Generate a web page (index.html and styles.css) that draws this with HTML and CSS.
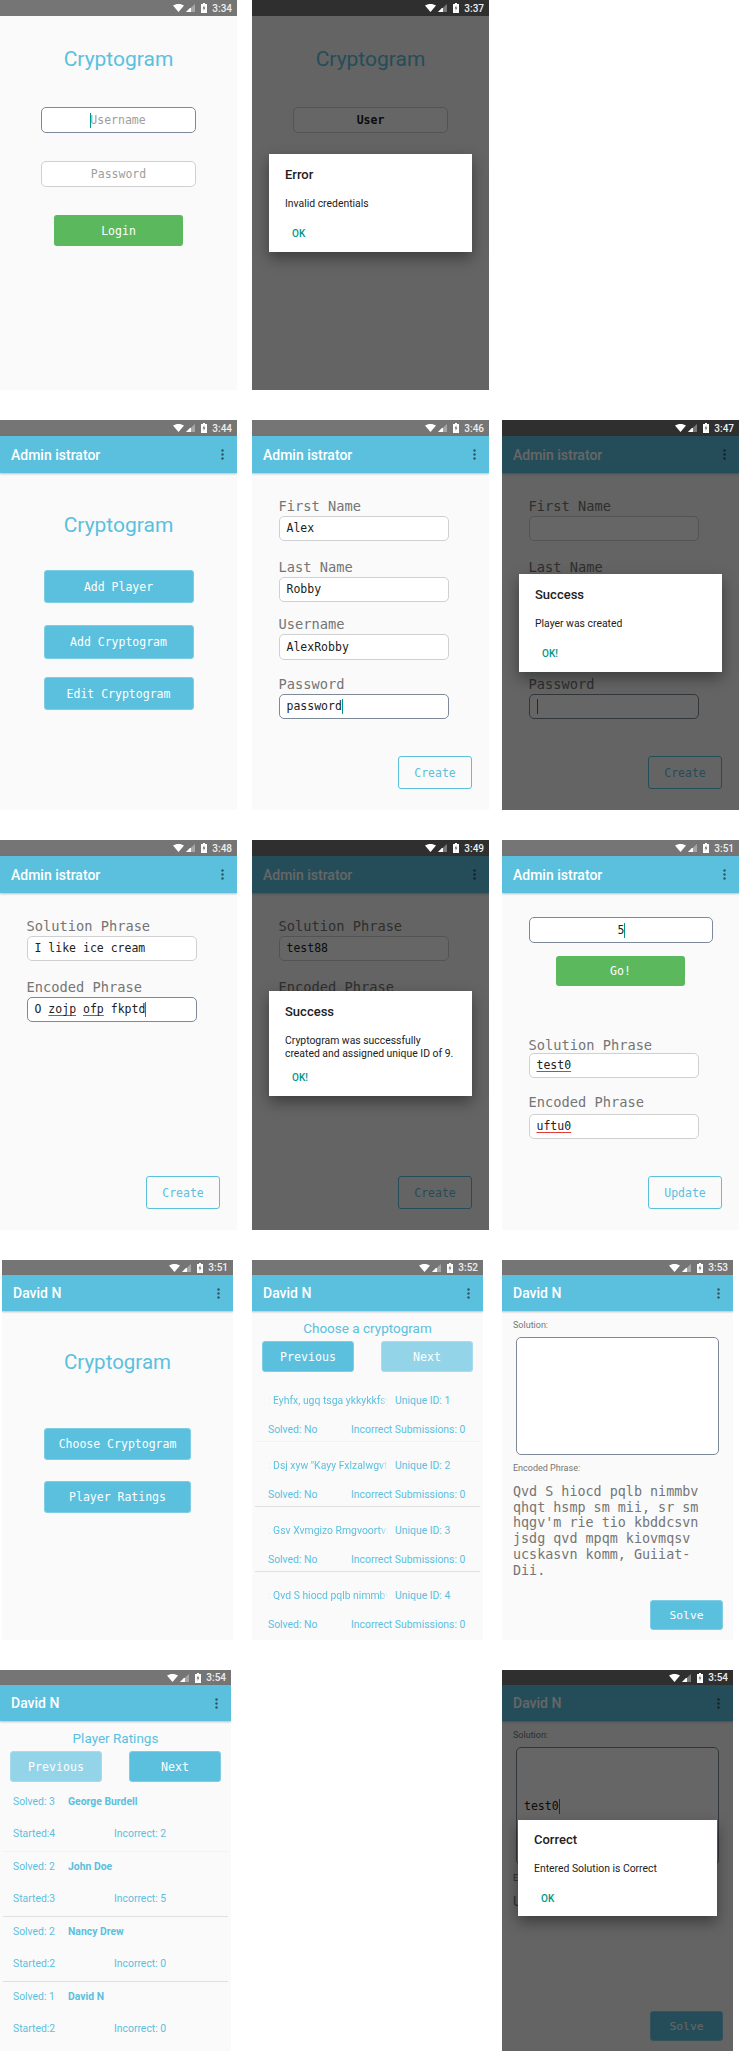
FILE: index.html
```html
<!DOCTYPE html>
<html lang="en">
<head>
    <meta charset="UTF-8">
    <meta name="viewport" content="width=device-width, initial-scale=1.0">
    <title>Cryptogram - App Screens</title>
    <link rel="stylesheet" href="styles.css">
</head>
<body>
    <!-- Status bar icons, reused on every screen -->
    <svg class="defs" xmlns="http://www.w3.org/2000/svg">
        <symbol id="wifi" viewBox="0 0 11 8"><path d="M0 1.6C1.5.5 3.4 0 5.5 0s4 .5 5.5 1.6L5.5 8z" fill="#fff"/></symbol>
        <symbol id="signal" viewBox="0 0 9 8"><path d="M9 0v8H0z" fill="#fff" opacity=".35"/><path d="M5 4v4H0l3.9-4z" fill="#fff"/></symbol>
        <symbol id="battery" viewBox="0 0 6 10"><path d="M2 0h2v1h2v9H0V1h2z" fill="#fff"/><path d="M3.4 2.2 1.6 5.6h1.2l-.3 2.4 1.9-3.5H3.2z" fill="#666"/></symbol>
        <symbol id="dots" viewBox="0 0 3 11"><circle cx="1.5" cy="1.5" r="1.2"/><circle cx="1.5" cy="5.5" r="1.2"/><circle cx="1.5" cy="9.5" r="1.2"/></symbol>
    </svg>

    <!-- Login -->
    <div class="row">
        <div class="screen">
            <div class="status"><svg class="i-wifi"><use href="#wifi"/></svg><svg class="i-signal"><use href="#signal"/></svg><svg class="i-battery"><use href="#battery"/></svg><span>3:34</span></div>
            <div class="content login">
                <h1 class="brand">Cryptogram</h1>
                <div class="input focus center hint"><span class="caret before"></span>Username</div>
                <div class="input center hint">Password</div>
                <div class="btn green">Login</div>
            </div>
        </div>
        <div class="screen dim">
            <div class="status"><svg class="i-wifi"><use href="#wifi"/></svg><svg class="i-signal"><use href="#signal"/></svg><svg class="i-battery"><use href="#battery"/></svg><span>3:37</span></div>
            <div class="content login">
                <h1 class="brand">Cryptogram</h1>
                <div class="input center strong">User</div>
            </div>
            <div class="scrim">
                <div class="dialog">
                    <h3>Error</h3>
                    <p>Invalid credentials</p>
                    <div class="action">OK</div>
                </div>
            </div>
        </div>
    </div>

    <!-- Administrator -->
    <div class="row">
        <div class="screen">
            <div class="status"><svg class="i-wifi"><use href="#wifi"/></svg><svg class="i-signal"><use href="#signal"/></svg><svg class="i-battery"><use href="#battery"/></svg><span>3:44</span></div>
            <div class="toolbar"><span>Admin istrator</span><svg class="i-dots"><use href="#dots"/></svg></div>
            <div class="content admin-home">
                <h1 class="brand">Cryptogram</h1>
                <div class="btn blue menu first">Add Player</div>
                <div class="btn blue menu second">Add Cryptogram</div>
                <div class="btn blue menu third">Edit Cryptogram</div>
            </div>
        </div>
        <div class="screen">
            <div class="status"><svg class="i-wifi"><use href="#wifi"/></svg><svg class="i-signal"><use href="#signal"/></svg><svg class="i-battery"><use href="#battery"/></svg><span>3:46</span></div>
            <div class="toolbar"><span>Admin istrator</span><svg class="i-dots"><use href="#dots"/></svg></div>
            <div class="content form">
                <div class="field"><label>First Name</label><div class="input">Alex</div></div>
                <div class="field"><label>Last Name</label><div class="input">Robby</div></div>
                <div class="field close"><label>Username</label><div class="input tall">AlexRobby</div></div>
                <div class="field mid"><label>Password</label><div class="input focus">password<span class="caret"></span></div></div>
                <div class="btn outline">Create</div>
            </div>
        </div>
        <div class="screen dim">
            <div class="status"><svg class="i-wifi"><use href="#wifi"/></svg><svg class="i-signal"><use href="#signal"/></svg><svg class="i-battery"><use href="#battery"/></svg><span>3:47</span></div>
            <div class="toolbar"><span>Admin istrator</span><svg class="i-dots"><use href="#dots"/></svg></div>
            <div class="content form">
                <div class="field"><label>First Name</label><div class="input"></div></div>
                <div class="field"><label>Last Name</label><div class="input"></div></div>
                <div class="field close"><label></label><div class="input tall"></div></div>
                <div class="field mid"><label>Password</label><div class="input focus"><span class="caret"></span></div></div>
                <div class="btn outline">Create</div>
            </div>
            <div class="scrim">
                <div class="dialog">
                    <h3>Success</h3>
                    <p>Player was created</p>
                    <div class="action">OK!</div>
                </div>
            </div>
        </div>
    </div>

    <!-- Add / edit cryptogram -->
    <div class="row">
        <div class="screen">
            <div class="status"><svg class="i-wifi"><use href="#wifi"/></svg><svg class="i-signal"><use href="#signal"/></svg><svg class="i-battery"><use href="#battery"/></svg><span>3:48</span></div>
            <div class="toolbar"><span>Admin istrator</span><svg class="i-dots"><use href="#dots"/></svg></div>
            <div class="content form">
                <div class="field"><label>Solution Phrase</label><div class="input">I like ice cream</div></div>
                <div class="field"><label>Encoded Phrase</label><div class="input focus">O <span class="spell">zojp</span> <span class="spell">ofp</span> fkptd<span class="caret"></span></div></div>
                <div class="btn outline">Create</div>
            </div>
        </div>
        <div class="screen dim">
            <div class="status"><svg class="i-wifi"><use href="#wifi"/></svg><svg class="i-signal"><use href="#signal"/></svg><svg class="i-battery"><use href="#battery"/></svg><span>3:49</span></div>
            <div class="toolbar"><span>Admin istrator</span><svg class="i-dots"><use href="#dots"/></svg></div>
            <div class="content form">
                <div class="field"><label>Solution Phrase</label><div class="input">test88</div></div>
                <div class="field"><label>Encoded Phrase</label><div class="input"></div></div>
                <div class="btn outline">Create</div>
            </div>
            <div class="scrim">
                <div class="dialog long">
                    <h3>Success</h3>
                    <p>Cryptogram was successfully<br>created and assigned unique ID of 9.</p>
                    <div class="action">OK!</div>
                </div>
            </div>
        </div>
        <div class="screen">
            <div class="status"><svg class="i-wifi"><use href="#wifi"/></svg><svg class="i-signal"><use href="#signal"/></svg><svg class="i-battery"><use href="#battery"/></svg><span>3:51</span></div>
            <div class="toolbar"><span>Admin istrator</span><svg class="i-dots"><use href="#dots"/></svg></div>
            <div class="content form edit">
                <div class="input focus center id-box">5<span class="caret"></span></div>
                <div class="btn green">Go!</div>
                <div class="field after-go"><label>Solution Phrase</label><div class="input"><span class="spell">test0</span></div></div>
                <div class="field after-solution"><label>Encoded Phrase</label><div class="input"><span class="spell">uftu0</span></div></div>
                <div class="btn outline">Update</div>
            </div>
        </div>
    </div>

    <!-- Player -->
    <div class="row">
        <div class="screen short inset">
            <div class="status"><svg class="i-wifi"><use href="#wifi"/></svg><svg class="i-signal"><use href="#signal"/></svg><svg class="i-battery"><use href="#battery"/></svg><span>3:51</span></div>
            <div class="toolbar"><span>David N</span><svg class="i-dots"><use href="#dots"/></svg></div>
            <div class="content player-home">
                <h1 class="brand">Cryptogram</h1>
                <div class="btn blue choice">Choose Cryptogram</div>
                <div class="btn blue choice">Player Ratings</div>
            </div>
        </div>
        <div class="screen short">
            <div class="status"><svg class="i-wifi"><use href="#wifi"/></svg><svg class="i-signal"><use href="#signal"/></svg><svg class="i-battery"><use href="#battery"/></svg><span>3:52</span></div>
            <div class="toolbar"><span>David N</span><svg class="i-dots"><use href="#dots"/></svg></div>
            <div class="content list-page">
                <h2 class="heading">Choose a cryptogram</h2>
                <div class="pager">
                    <div class="btn blue">Previous</div>
                    <div class="btn blue off">Next</div>
                </div>
                <div class="item faint">
                    <div class="item-top"><span class="cut">: Eyhfx, ugq tsga ykkykkfsy</span><span>Unique ID: 1</span></div>
                    <div class="item-bottom"><span>Solved: No</span><span>Incorrect Submissions: 0</span></div>
                </div>
                <div class="item">
                    <div class="item-top"><span class="cut">: Dsj xyw "Kayy Fxlzalwgvt</span><span>Unique ID: 2</span></div>
                    <div class="item-bottom"><span>Solved: No</span><span>Incorrect Submissions: 0</span></div>
                </div>
                <div class="item">
                    <div class="item-top"><span class="cut">: Gsv Xvmgizo Rmgvoortvm</span><span>Unique ID: 3</span></div>
                    <div class="item-bottom"><span>Solved: No</span><span>Incorrect Submissions: 0</span></div>
                </div>
                <div class="item last">
                    <div class="item-top"><span class="cut">: Qvd S hiocd pqlb nimmbv</span><span>Unique ID: 4</span></div>
                    <div class="item-bottom"><span>Solved: No</span><span>Incorrect Submissions: 0</span></div>
                </div>
            </div>
        </div>
        <div class="screen short">
            <div class="status"><svg class="i-wifi"><use href="#wifi"/></svg><svg class="i-signal"><use href="#signal"/></svg><svg class="i-battery"><use href="#battery"/></svg><span>3:53</span></div>
            <div class="toolbar"><span>David N</span><svg class="i-dots"><use href="#dots"/></svg></div>
            <div class="content solve">
                <div class="small-label">Solution:</div>
                <div class="input focus solution"></div>
                <div class="small-label">Encoded Phrase:</div>
                <div class="encoded">Qvd S hiocd pqlb nimmbv<br>qhqt hsmp sm mii, sr sm<br>hqgv'm rie tio kbddcsvn<br>jsdg qvd mpqm kiovmqsv<br>ucskasvn komm, Guiiat-<br>Dii.</div>
                <div class="btn blue solve-btn">Solve</div>
            </div>
        </div>
    </div>

    <!-- Ratings and solved dialog -->
    <div class="row">
        <div class="screen short tail">
            <div class="status"><svg class="i-wifi"><use href="#wifi"/></svg><svg class="i-signal"><use href="#signal"/></svg><svg class="i-battery"><use href="#battery"/></svg><span>3:54</span></div>
            <div class="toolbar"><span>David N</span><svg class="i-dots"><use href="#dots"/></svg></div>
            <div class="content list-page">
                <h2 class="heading">Player Ratings</h2>
                <div class="pager">
                    <div class="btn blue off">Previous</div>
                    <div class="btn blue">Next</div>
                </div>
                <div class="rating faint">
                    <div class="rating-top"><span>Solved: 3</span><strong>George Burdell</strong></div>
                    <div class="rating-bottom"><span>Started:4</span><span>Incorrect: 2</span></div>
                </div>
                <div class="rating">
                    <div class="rating-top"><span>Solved: 2</span><strong>John Doe</strong></div>
                    <div class="rating-bottom"><span>Started:3</span><span>Incorrect: 5</span></div>
                </div>
                <div class="rating">
                    <div class="rating-top"><span>Solved: 2</span><strong>Nancy Drew</strong></div>
                    <div class="rating-bottom"><span>Started:2</span><span>Incorrect: 0</span></div>
                </div>
                <div class="rating last">
                    <div class="rating-top"><span>Solved: 1</span><strong>David N</strong></div>
                    <div class="rating-bottom"><span>Started:2</span><span>Incorrect: 0</span></div>
                </div>
            </div>
        </div>
        <div class="blank"></div>
        <div class="screen short tail dim">
            <div class="status"><svg class="i-wifi"><use href="#wifi"/></svg><svg class="i-signal"><use href="#signal"/></svg><svg class="i-battery"><use href="#battery"/></svg><span>3:54</span></div>
            <div class="toolbar"><span>David N</span><svg class="i-dots"><use href="#dots"/></svg></div>
            <div class="content solve">
                <div class="small-label">Solution:</div>
                <div class="input focus solution typed">test0<span class="caret"></span></div>
                <div class="small-label">E</div>
                <div class="encoded">U</div>
                <div class="btn blue solve-btn">Solve</div>
            </div>
            <div class="scrim">
                <div class="dialog small">
                    <h3>Correct</h3>
                    <p>Entered Solution is Correct</p>
                    <div class="action">OK</div>
                </div>
            </div>
        </div>
    </div>
</body>
</html>
```

FILE: styles.css
```css
body {
    margin: 0;
    background-color: #fff;
    font-family: Roboto, sans-serif;
}

.defs {
    display: none;
}

.row {
    display: grid;
    grid-template-columns: 252px 250px 238px;
    align-items: start;
    margin-bottom: 30px;
}

.row:last-child {
    margin-bottom: 0;
}

.screen {
    position: relative;
    display: flex;
    flex-direction: column;
    width: 237px;
    height: 390px;
    overflow: hidden;
    background-color: #fafafa;
}

.screen.short {
    width: 231px;
    height: 380px;
}

.screen.tail {
    height: 381px;
}

.screen.inset {
    margin-left: 2px;
}

/* Status bar and toolbar */
.status {
    display: flex;
    align-items: center;
    justify-content: flex-end;
    flex: none;
    height: 16px;
    padding-right: 5px;
    background-color: #757575;
    color: #eee;
    font-size: 10px;
    font-weight: 500;
}

.short .status {
    height: 15px;
}

.dim .status {
    background-color: #2f2f2f;
}

.i-wifi {
    width: 11px;
    height: 8px;
    margin-right: 2px;
}

.i-signal {
    width: 9px;
    height: 8px;
    margin-right: 6px;
}

.i-battery {
    width: 6px;
    height: 10px;
    margin-right: 5px;
}

.toolbar {
    position: relative;
    display: flex;
    align-items: center;
    justify-content: space-between;
    flex: none;
    height: 37px;
    padding: 0 13px 0 11px;
    background-color: #5bc0de;
    color: #fff;
    font-size: 14px;
    font-weight: 500;
    box-shadow: 0 1px 2px rgba(0, 0, 0, 0.25);
}

.short .toolbar {
    height: 36px;
}

.i-dots {
    width: 3px;
    height: 11px;
    fill: #2f5563;
}

.content {
    display: flex;
    flex-direction: column;
    flex: 1;
    min-height: 0;
}

.brand {
    margin: 0;
    height: 26px;
    color: #5bc0de;
    font-size: 21px;
    font-weight: 400;
    line-height: 26px;
    text-align: center;
}

.short .brand {
    font-size: 20.5px;
    line-height: 25px;
}

/* Inputs */
.input {
    box-sizing: border-box;
    flex: none;
    height: 25px;
    padding: 0 7px;
    background-color: #fff;
    border: 1px solid #d0d0d0;
    border-radius: 5px;
    color: #212121;
    font-family: "DejaVu Sans Mono", monospace;
    font-size: 11.5px;
    line-height: 23px;
    white-space: pre;
}

.input.tall {
    height: 26px;
    line-height: 24px;
}

.input.focus {
    border-color: #7e8a97;
}

.input.center {
    text-align: center;
}

.input.hint {
    color: #9e9e9e;
}

.input.strong {
    font-weight: 700;
}

.caret {
    display: inline-block;
    width: 1px;
    height: 15px;
    margin-right: -1px;
    background-color: #009688;
    vertical-align: middle;
}

.caret.before {
    margin-left: -1px;
}

.spell {
    text-decoration: underline;
    text-decoration-color: #e53935;
    text-underline-offset: 2px;
}

/* Buttons */
.btn {
    display: flex;
    align-items: center;
    justify-content: center;
    box-sizing: border-box;
    flex: none;
    border-radius: 3px;
    color: #fff;
    font-family: "DejaVu Sans Mono", monospace;
    font-size: 11.5px;
}

.btn.green {
    background-color: #5cb85c;
}

.btn.blue {
    background-color: #5bc0de;
    border: 1px solid #7fcde5;
}

.btn.off {
    background-color: #94d4e9;
    border-color: #a6dcee;
}

.btn.outline {
    align-self: flex-end;
    width: 74px;
    height: 33px;
    margin-top: auto;
    margin-right: 17px;
    margin-bottom: 21px;
    background-color: #fafafa;
    border: 1px solid #5bc0de;
    color: #5bc0de;
}

/* Login screens */
.login {
    align-items: center;
    padding-top: 30px;
}

.login .input {
    width: 155px;
    height: 26px;
    margin-top: 28px;
    line-height: 24px;
}

.login .brand + .input {
    margin-top: 35px;
}

.login .btn {
    width: 129px;
    height: 31px;
    margin-top: 28px;
}

/* Home menus */
.admin-home {
    align-items: center;
    padding-top: 39px;
}

.menu {
    width: 150px;
    height: 33px;
}

.menu.first {
    margin-top: 32px;
}

.menu.second {
    height: 34px;
    margin-top: 22px;
}

.menu.third {
    margin-top: 18px;
}

.player-home {
    align-items: center;
    padding-top: 39px;
}

.choice {
    width: 147px;
    height: 32px;
    margin-top: 21px;
}

.player-home .brand + .choice {
    margin-top: 52px;
}

/* Form screens */
.form {
    padding-top: 25px;
    padding-left: 26.5px;
}

.field + .field {
    margin-top: 18px;
}

.field.close {
    margin-top: 14px;
}

.field.mid {
    margin-top: 16px;
}

.field label {
    display: block;
    height: 16px;
    margin-bottom: 2px;
    color: #757575;
    font-family: "DejaVu Sans Mono", monospace;
    font-size: 13.7px;
    line-height: 16px;
}

.field .input {
    width: 170px;
}

.edit {
    padding-top: 24px;
    padding-left: 0;
}

.edit .id-box {
    width: 184px;
    height: 26px;
    margin-left: 27px;
    line-height: 24px;
}

.edit .green {
    width: 129px;
    height: 30px;
    margin-top: 13px;
    margin-left: 54px;
}

.edit .field {
    margin-left: 26.5px;
}

.edit .after-go {
    margin-top: 51px;
}

.edit .after-go label {
    margin-bottom: 0;
}

.edit .after-solution {
    margin-top: 16px;
}

.edit .after-solution label {
    margin-bottom: 4px;
}

/* Lists */
.list-page {
    padding-top: 8px;
}

.heading {
    margin: 0;
    height: 18px;
    color: #5bc0de;
    font-size: 13.5px;
    font-weight: 400;
    line-height: 18px;
    text-align: center;
}

.pager {
    display: flex;
    justify-content: space-between;
    margin: 4px 10px 5px;
}

.pager .btn {
    width: 92px;
    height: 31px;
    font-size: 11.6px;
}

.item,
.rating {
    box-sizing: border-box;
    flex: none;
    height: 65px;
    margin: 0 3px;
    border-bottom: 1px solid #e0e0e0;
    color: #5bc0de;
    font-size: 10.4px;
    line-height: 13px;
}

.faint {
    border-bottom-color: #f3f3f3;
}

.last {
    border-bottom: 0;
}

.item {
    padding: 17px 0 0 13px;
}

.item-top {
    display: grid;
    grid-template-columns: 120px auto;
    column-gap: 7px;
}

.cut {
    overflow: hidden;
    white-space: nowrap;
    -webkit-mask-image: linear-gradient(to right, transparent, #000 6px, #000 112px, transparent);
    mask-image: linear-gradient(to right, transparent, #000 6px, #000 112px, transparent);
}

.item-bottom {
    display: grid;
    grid-template-columns: 83px auto;
    margin-top: 16px;
}

.rating {
    padding: 8px 0 0 10px;
}

.rating-top {
    display: grid;
    grid-template-columns: 55px auto;
}

.rating-top strong {
    font-weight: 700;
}

.rating-bottom {
    display: grid;
    grid-template-columns: 101px auto;
    margin-top: 19px;
}

/* Solve screens */
.solve {
    padding-top: 8px;
    padding-left: 11px;
}

.small-label {
    height: 12px;
    color: #757575;
    font-size: 9px;
    line-height: 12px;
}

.solution {
    width: 203px;
    height: 118px;
    margin: 6px 0 7px 3px;
}

.typed {
    line-height: 116px;
}

.encoded {
    margin-top: 10px;
    color: #757575;
    font-family: "DejaVu Sans Mono", monospace;
    font-size: 13.4px;
    line-height: 15.7px;
    white-space: nowrap;
}

.solve-btn {
    align-self: flex-end;
    width: 73px;
    height: 30px;
    margin-top: auto;
    margin-right: 10px;
    margin-bottom: 10px;
    font-size: 11.3px;
}

/* Dimmed overlay and dialogs */
.scrim {
    position: absolute;
    top: 16px;
    right: 0;
    bottom: 0;
    left: 0;
    display: flex;
    align-items: center;
    justify-content: center;
    background-color: rgba(0, 0, 0, 0.6);
}

.short .scrim {
    top: 15px;
}

.dialog {
    box-sizing: border-box;
    width: 203px;
    padding: 13px 16px 12px;
    background-color: #fff;
    box-shadow: 0 6px 14px rgba(0, 0, 0, 0.4);
}

.dialog.small {
    width: 199px;
    padding-top: 12px;
    padding-bottom: 11px;
}

.dialog h3 {
    margin: 0;
    height: 16px;
    color: #212121;
    font-size: 13px;
    font-weight: 500;
    line-height: 16px;
}

.dialog p {
    margin: 14px 0 0;
    color: #212121;
    font-size: 10.4px;
    line-height: 13px;
}

.action {
    margin-top: 17px;
    margin-left: 7px;
    color: #009688;
    font-size: 10px;
    font-weight: 500;
    line-height: 13px;
}

.dialog.long .action {
    margin-top: 11px;
}
```
